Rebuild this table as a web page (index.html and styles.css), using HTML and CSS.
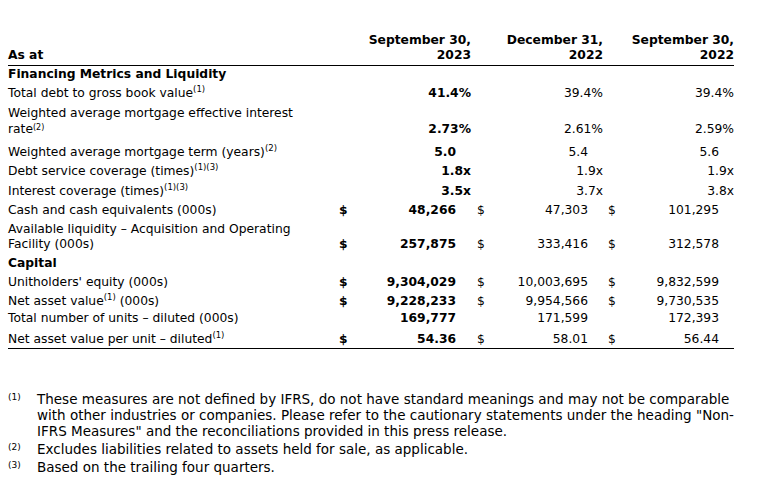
FILE: index.html
```html
<!DOCTYPE html>
<html>
<head>
<meta charset="utf-8">
<link rel="stylesheet" href="styles.css">
</head>
<body>
<div class="page">
<table class="fin">
  <colgroup>
    <col class="c-label"><col class="c-cur"><col class="c-val1"><col class="c-cur"><col class="c-val2"><col class="c-cur"><col class="c-val3">
  </colgroup>
  <thead>
    <tr class="hdr">
      <th class="lbl">As at</th>
      <th colspan="2" class="num">September 30,<br>2023</th>
      <th colspan="2" class="num">December 31,<br>2022</th>
      <th colspan="2" class="num">September 30,<br>2022</th>
    </tr>
  </thead>
  <tbody>
    <tr class="section pt1"><td class="lbl">Financing Metrics and Liquidity</td><td></td><td></td><td></td><td></td><td></td><td></td></tr>
    <tr><td class="lbl">Total debt to gross book value<sup>(1)</sup></td><td></td><td class="num b">41.4%</td><td></td><td class="num">39.4%</td><td></td><td class="num">39.4%</td></tr>
    <tr class="lh16"><td class="lbl">Weighted average mortgage effective interest rate<sup class="low">(2)</sup></td><td></td><td class="num b">2.73%</td><td></td><td class="num">2.61%</td><td></td><td class="num">2.59%</td></tr>
    <tr class="pt6"><td class="lbl">Weighted average mortgage term (years)<sup>(2)</sup></td><td></td><td class="num b amt">5.0</td><td></td><td class="num amt">5.4</td><td></td><td class="num amt">5.6</td></tr>
    <tr><td class="lbl">Debt service coverage (times)<sup>(1)(3)</sup></td><td></td><td class="num b">1.8x</td><td></td><td class="num">1.9x</td><td></td><td class="num">1.9x</td></tr>
    <tr class="pt3"><td class="lbl">Interest coverage (times)<sup>(1)(3)</sup></td><td></td><td class="num b">3.5x</td><td></td><td class="num">3.7x</td><td></td><td class="num">3.8x</td></tr>
    <tr><td class="lbl">Cash and cash equivalents (000s)</td><td class="cur b">$</td><td class="num b amt">48,266</td><td class="cur">$</td><td class="num amt">47,303</td><td class="cur">$</td><td class="num amt">101,295</td></tr>
    <tr><td class="lbl">Available liquidity – Acquisition and Operating Facility (000s)</td><td class="cur b">$</td><td class="num b amt">257,875</td><td class="cur">$</td><td class="num amt">333,416</td><td class="cur">$</td><td class="num amt">312,578</td></tr>
    <tr class="section"><td class="lbl">Capital</td><td></td><td></td><td></td><td></td><td></td><td></td></tr>
    <tr><td class="lbl">Unitholders' equity (000s)</td><td class="cur b">$</td><td class="num b amt">9,304,029</td><td class="cur">$</td><td class="num amt">10,003,695</td><td class="cur">$</td><td class="num amt">9,832,599</td></tr>
    <tr class="pb1"><td class="lbl">Net asset value<sup>(1)</sup> (000s)</td><td class="cur b">$</td><td class="num b amt">9,228,233</td><td class="cur">$</td><td class="num amt">9,954,566</td><td class="cur">$</td><td class="num amt">9,730,535</td></tr>
    <tr class="pt1 pb1"><td class="lbl">Total number of units – diluted (000s)</td><td></td><td class="num b amt">169,777</td><td></td><td class="num amt">171,599</td><td></td><td class="num amt">172,393</td></tr>
    <tr class="pt5 pb0 last"><td class="lbl">Net asset value per unit – diluted<sup>(1)</sup></td><td class="cur b">$</td><td class="num b amt">54.36</td><td class="cur">$</td><td class="num amt">58.01</td><td class="cur">$</td><td class="num amt">56.44</td></tr>
  </tbody>
</table>

<ol class="notes">
  <li><span class="mark">(1)</span><span class="note-text">These measures are not defined by IFRS, do not have standard meanings and may not be comparable with other industries or companies. Please refer to the cautionary statements under the heading "Non-IFRS Measures" and the reconciliations provided in this press release.</span></li>
  <li><span class="mark">(2)</span><span class="note-text">Excludes liabilities related to assets held for sale, as applicable.</span></li>
  <li><span class="mark">(3)</span><span class="note-text">Based on the trailing four quarters.</span></li>
</ol>
</div>
</body>
</html>
```

FILE: styles.css
```css
html, body {
  margin: 0;
  padding: 0;
  background: #ffffff;
}

body {
  font-family: "DejaVu Sans", Verdana, sans-serif;
  font-size: 12.3px;
  color: #000000;
}

.page {
  padding: 32px 0 0 8px;
}

.fin {
  width: 726px;
  table-layout: fixed;
  border-collapse: collapse;
}

.c-label { width: 328px; }
.c-cur { width: 20px; }
.c-val1 { width: 115px; }
.c-val2 { width: 112px; }
.c-val3 { width: 111px; }

.fin th,
.fin td {
  padding: 2px 0;
  line-height: 15px;
  vertical-align: bottom;
  white-space: nowrap;
}

.fin td.lbl {
  white-space: normal;
  padding-right: 20px;
}

.hdr th {
  font-weight: bold;
  border-bottom: 1px solid #000;
  padding: 1px 0 2px 0;
}

.hdr th.lbl {
  text-align: left;
}

.num {
  text-align: right;
}

.fin td.amt {
  padding-right: 15px;
}

.fin td.cur {
  text-align: left;
  padding-left: 3px;
}

.fin td.cur + td + td.cur {
  padding-left: 6px;
}

.fin td.cur + td + td.cur + td + td.cur {
  padding-left: 5px;
}

.b {
  font-weight: bold;
}

.section td {
  font-weight: bold;
}

.lh16 td { line-height: 16px; }
.pt1 td { padding-top: 1px; }
.pt3 td { padding-top: 3px; }
.pt5 td { padding-top: 5px; }
.pt6 td { padding-top: 6px; }
.pb1 td { padding-bottom: 1px; }
.pb0 td { padding-bottom: 1px; }

.last td {
  border-bottom: 1px solid #000;
}

sup {
  font-size: 8.5px;
  line-height: 0;
  vertical-align: 5px;
}

sup.low {
  font-size: 8px;
  vertical-align: 3px;
}

.notes {
  list-style: none;
  margin: 42px 0 0 0;
  padding: 0;
  width: 727px;
}

.notes li {
  display: flex;
  font-size: 13.5px;
  line-height: 16px;
  margin-bottom: 2px;
}

.notes .mark {
  flex: 0 0 29px;
  font-size: 9px;
  line-height: 12px;
}

.notes .note-text {
  flex: 1;
}
```
